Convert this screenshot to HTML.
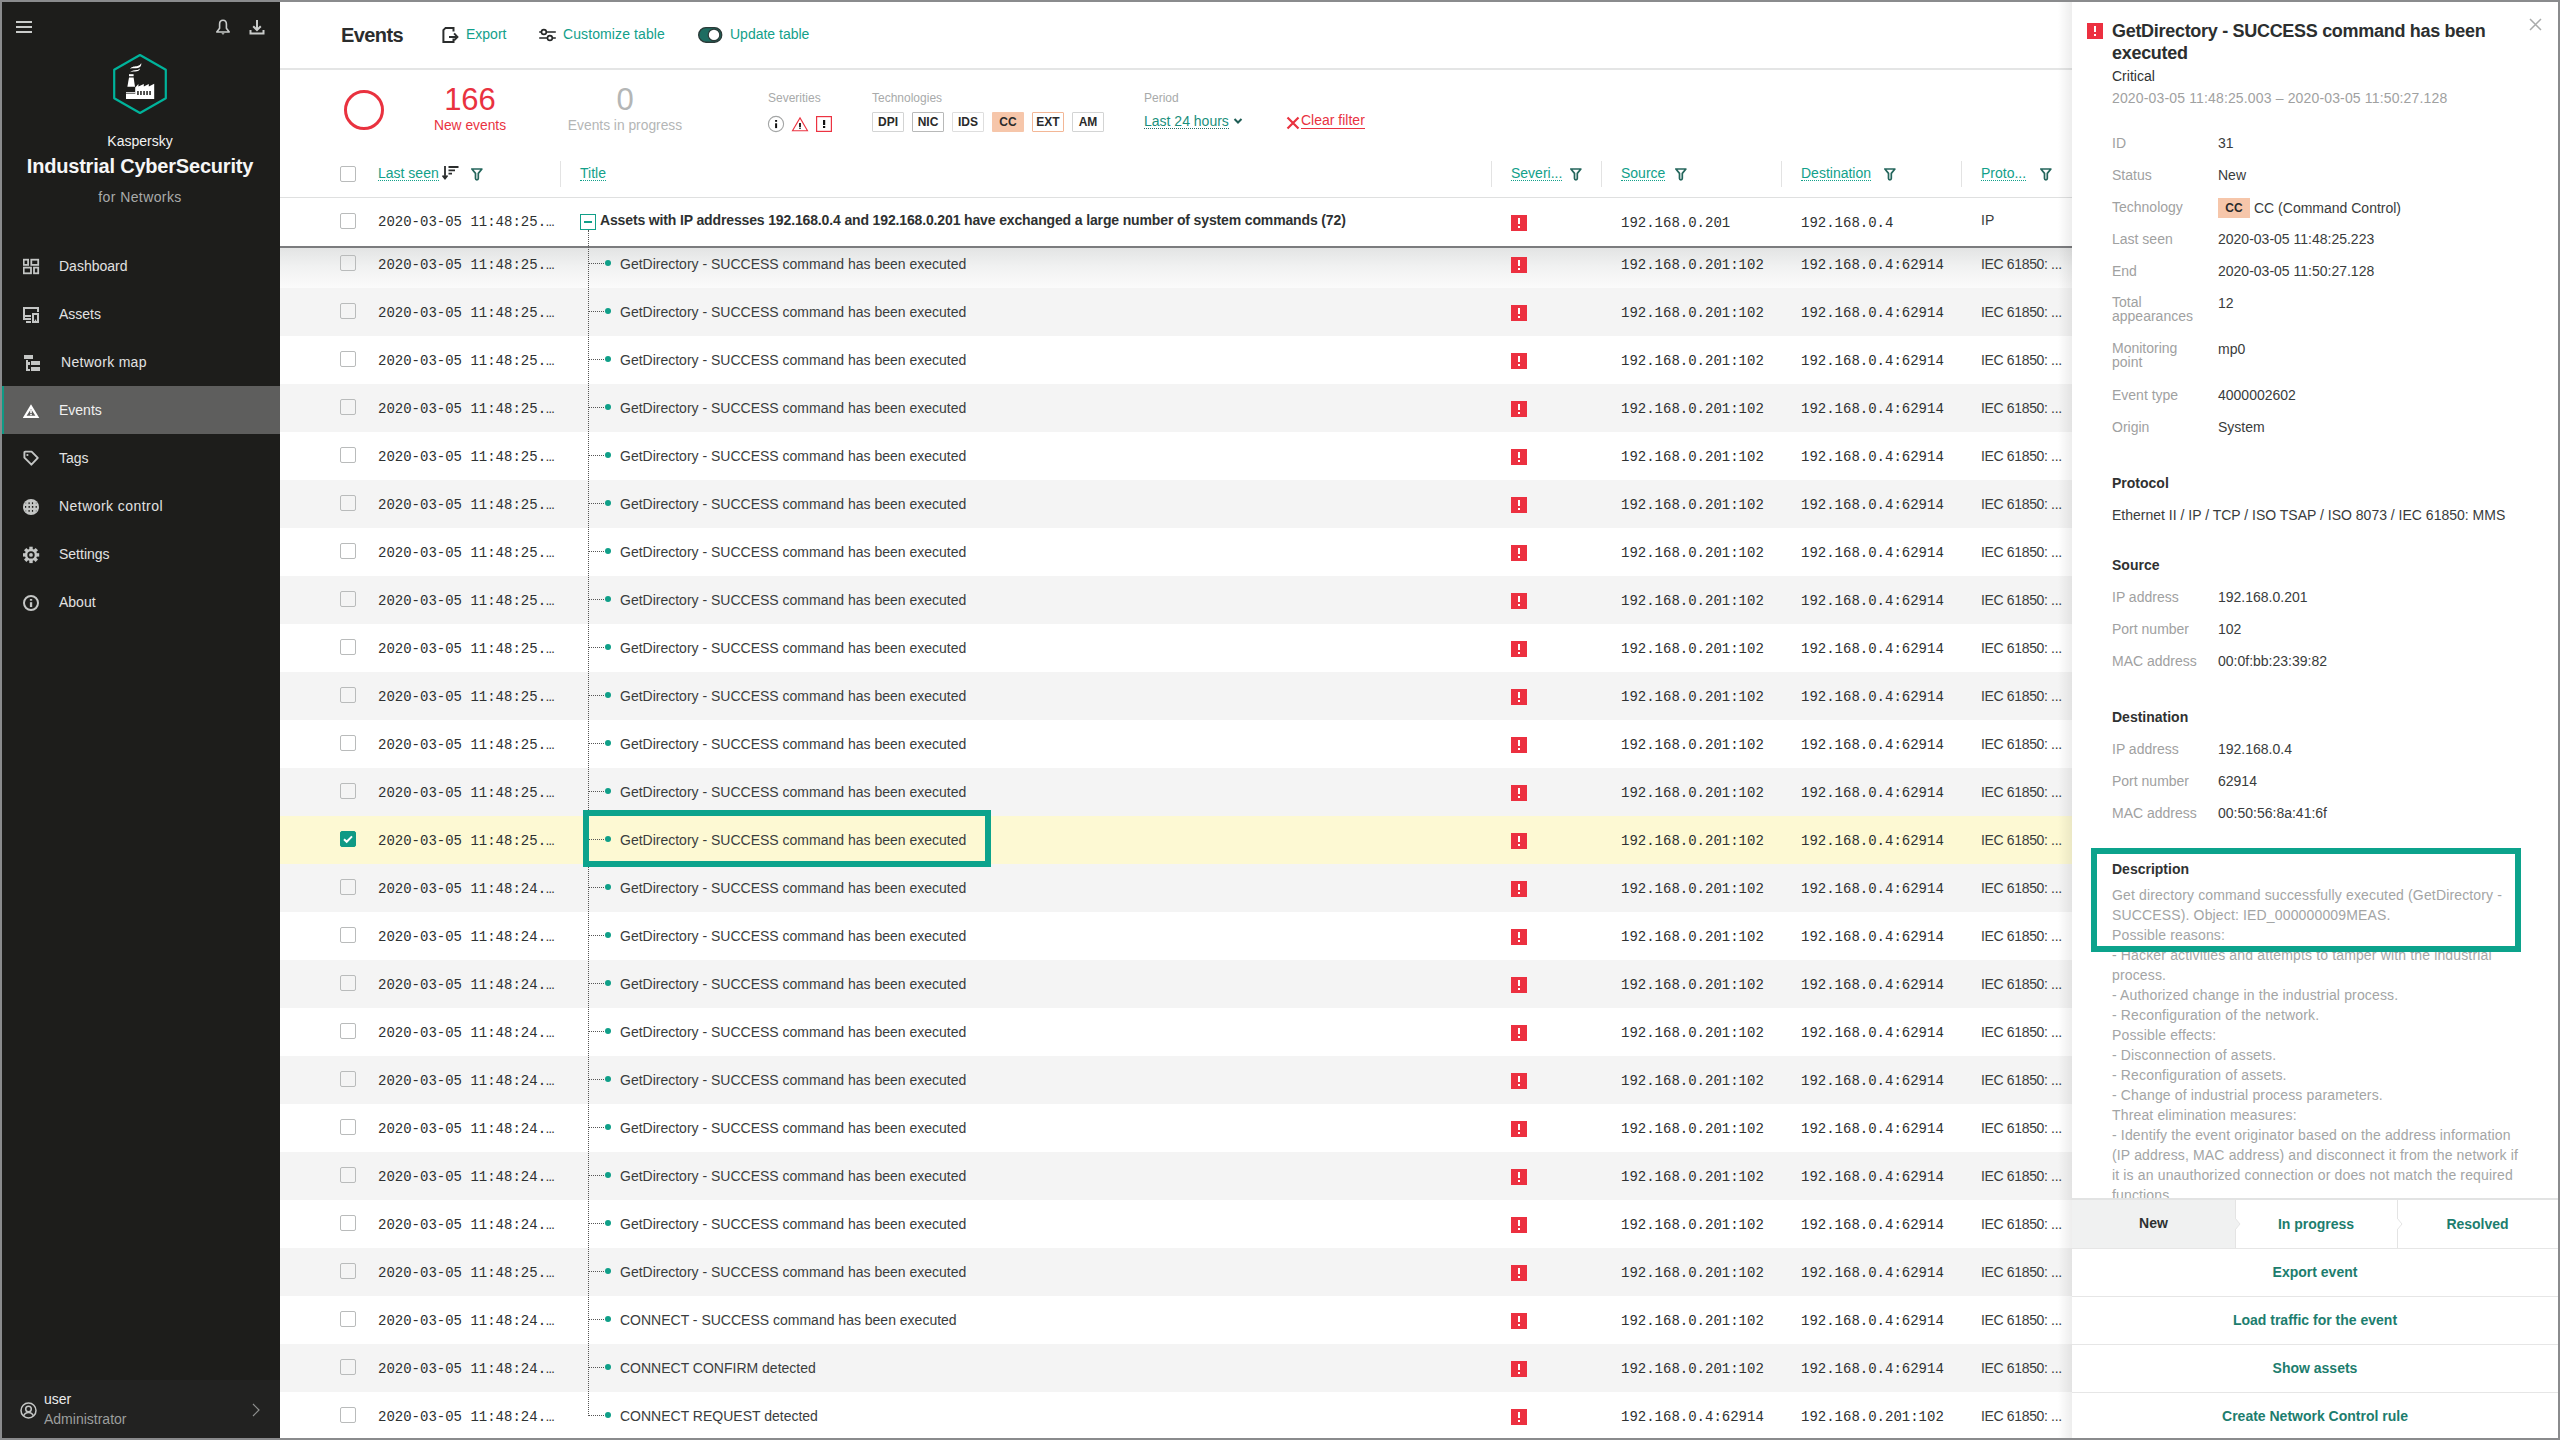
<!DOCTYPE html>
<html><head><meta charset="utf-8">
<style>
*{margin:0;padding:0;box-sizing:border-box}
html,body{width:2560px;height:1440px;overflow:hidden;background:#8a8b8d;font-family:"Liberation Sans",sans-serif;color:#2f3332}
.abs,.row,.cb,.mono,.ttl,.sev,.hdot,.dot,.t{position:absolute}
#side{position:absolute;left:2px;top:2px;width:278px;height:1436px;background:#1d1d1b;overflow:hidden}
#main{position:absolute;left:280px;top:2px;width:1792px;height:1436px;background:#fff;overflow:hidden}
#panel{position:absolute;left:2072px;top:2px;width:486px;height:1436px;background:#fff;overflow:hidden}
.t{white-space:nowrap;line-height:18px}
.mono{font-family:"Liberation Mono",monospace;font-size:14px;line-height:18px;white-space:nowrap;color:#2e3131}
.ttl{font-size:14px;line-height:18px;white-space:nowrap;color:#3a3d3d}
.row{left:280px;width:1792px}
.cb{width:16px;height:16px;border:1px solid #b9bbbb;border-radius:2px;background:transparent}
.cb.chk{background:#0f9a85;border-color:#0f9a85}
.cb.chk svg{position:absolute;left:-1px;top:-1px}
.sev{width:16px;height:16px}
.sev svg{display:block}
.hdot{width:15px;height:0;border-top:1px dotted #555}
.dot{width:6px;height:6px;border-radius:50%;background:#0f9f88}
.menu{position:absolute;left:0;width:278px;height:48px}
.menu .lab{position:absolute;left:57px;top:15px;font-size:14px;line-height:18px;color:#e2e2e2;white-space:nowrap}
.menu svg{position:absolute;left:21px;top:16px}
.hdr{color:#12a08a;font-size:14px;white-space:nowrap;position:absolute;line-height:14px;border-bottom:1px dotted #12a08a}
.sep{position:absolute;top:161px;width:1px;height:26px;background:#e3e3e3}
.fi{position:absolute;top:167px}
.chip{position:absolute;top:112px;height:20px;border:1px solid #d3d4d4;font-weight:700;font-size:12px;line-height:19px;text-align:center;color:#2a2a2a;border-radius:1px}
.plab{position:absolute;left:40px;font-size:14px;line-height:16px;color:#9fa1a1;white-space:nowrap}
.pval{position:absolute;left:146px;font-size:14px;line-height:16px;color:#393c3c;white-space:nowrap}
.psec{position:absolute;left:40px;font-size:14px;font-weight:700;color:#2f3131;white-space:nowrap;line-height:18px}
.btn{position:absolute;left:0;width:486px;height:48px;border-top:1px solid #e6e6e6;text-align:center;font-weight:700;font-size:14px;line-height:46px;color:#1d7d6e}
</style></head><body>

<div id="side">
  <!-- hamburger -->
  <div class="abs" style="left:14px;top:19px;width:16px;height:2px;background:#c9cbca"></div>
  <div class="abs" style="left:14px;top:24px;width:16px;height:2px;background:#c9cbca"></div>
  <div class="abs" style="left:14px;top:29px;width:16px;height:2px;background:#c9cbca"></div>
  <!-- bell -->
  <svg class="abs" style="left:213px;top:17px" width="16" height="16" viewBox="0 0 16 16"><path d="M8 1.2c-2.2 0-3.4 1.6-3.4 3.8v4.2L1.8 13h12.4l-2.8-3.8V5c0-2.2-1.2-3.8-3.4-3.8z" fill="none" stroke="#c9cbca" stroke-width="1.6" stroke-linejoin="round"/><path d="M6.3 14.2h3.4L8 15.8z" fill="#c9cbca"/></svg>
  <!-- download -->
  <svg class="abs" style="left:247px;top:17px" width="16" height="16" viewBox="0 0 16 16"><path d="M8 1v10M4.2 7.2L8 11l3.8-3.8" fill="none" stroke="#c9cbca" stroke-width="2"/><path d="M1.5 11v3.6h13V11" fill="none" stroke="#c9cbca" stroke-width="2"/></svg>
  <!-- logo -->
  <svg class="abs" style="left:106px;top:47px" width="64" height="72" viewBox="0 0 64 72">
    <path transform="translate(-108,-49)" d="M140 55 L165.8 69.8 L165.8 98.2 L140 113 L114.2 98.2 L114.2 69.8 Z" fill="none" stroke="#00b39b" stroke-width="2.2" stroke-linejoin="round"/>
    <g transform="translate(-108,-49)" fill="#fff">
      <path d="M130 68.8c2-2.6 5.2-2.4 7.6-2.8 1.6-.3 3-1.4 3.6-2.9.5 2.6-.8 4.4-3.2 4.8-2.6.4-5.6-.2-8 .9z"/>
      <path d="M130 72.3c1.8-2 4.4-2 6.6-2.3 1.4-.2 2.6-.8 3.4-1.6-.4 1.8-1.6 2.6-3.2 2.9-2.2.3-4.8.1-6.8 1z"/>
      <rect x="129" y="74.2" width="4.6" height="2"/>
      <path d="M129 77.4h4.6l1.4 9.4h-7.6z"/>
      <rect x="126" y="92.2" width="9.2" height="1.2"/>
      <path d="M126 94h9.2v-6.6l3.2-3.4v2.6l5.4-2.6v2.6l5-2.6v2.6l5.4-2.8V99H126z"/>
    </g>
    <g transform="translate(-108,-49)" fill="#1d1d1b">
      <rect x="137.2" y="91" width="1.5" height="4"/><rect x="140.2" y="91" width="1.5" height="4"/><rect x="143.3" y="91" width="1.5" height="4"/><rect x="146.3" y="91" width="1.5" height="4"/><rect x="149.3" y="91" width="1.5" height="4"/>
    </g>
  </svg>
  <div class="t" style="left:0;width:276px;text-align:center;top:130px;font-size:14px;color:#f2f2f2">Kaspersky</div>
  <div class="t" style="left:0;width:276px;text-align:center;top:152px;font-size:20px;line-height:24px;font-weight:700;color:#f6f6f6;letter-spacing:-0.2px">Industrial CyberSecurity</div>
  <div class="t" style="left:0;width:276px;text-align:center;top:186px;font-size:14px;color:#a9abaa;letter-spacing:0.4px">for Networks</div>

  <div class="menu" style="top:240px"><svg width="17" height="17" viewBox="0 0 17 17" fill="none" stroke="#c4c6c5" stroke-width="1.8"><rect x=".7" y="1.7" width="4.4" height="5.2"/><rect x="8.3" y="1.7" width="6.9" height="5.2"/><rect x=".7" y="9.6" width="7.3" height="5.7"/><rect x="11" y="9.6" width="4.2" height="5.7"/></svg><div class="lab">Dashboard</div></div>
  <div class="menu" style="top:288px"><svg width="17" height="18" viewBox="0 0 17 18" fill="#c4c6c5"><path d="M1 13V2h14v4" fill="none" stroke="#c4c6c5" stroke-width="2"/><rect x="2" y="9" width="6" height="2"/><rect x="0" y="12" width="8" height="2"/><rect x="3" y="15" width="5" height="2"/><rect x="10" y="8" width="5" height="8" fill="none" stroke="#c4c6c5" stroke-width="2"/><rect x="11.8" y="13.6" width="1.4" height="1.4"/></svg><div class="lab">Assets</div></div>
  <div class="menu" style="top:336px"><svg width="18" height="18" viewBox="0 0 18 18" fill="#c4c6c5"><rect x="1" y="1" width="9" height="4"/><rect x="3" y="6" width="2" height="11"/><rect x="5" y="8" width="2" height="3"/><rect x="3" y="15" width="4" height="2"/><rect x="8" y="7" width="9" height="4"/><rect x="8" y="13" width="9" height="4"/></svg><div class="lab" style="left:59px;letter-spacing:0.3px">Network map</div></div>
  <div class="menu" style="top:384px;background:#5e5e5d;border-left:2px solid #0f9a85"><svg width="17" height="17" viewBox="0 0 17 17" style="left:19px"><path fill-rule="evenodd" d="M8 2.2L16.3 16H-.3z M8 7L12.4 13.8H3.6z" fill="#fff"/><rect x="7.2" y="8" width="1.6" height="3.2" fill="#fff"/><rect x="7.2" y="12" width="1.6" height="1.2" fill="#fff"/></svg><div class="lab" style="left:55px;color:#f0f0f0">Events</div></div>
  <div class="menu" style="top:432px"><svg width="17" height="18" viewBox="0 0 17 18" fill="none" stroke="#c4c6c5" stroke-width="1.9"><path d="M1.4 2.4Q1.4 1.6 2.2 1.6H8.6L14.8 7.9 8.4 14.7 1.4 7.7z" stroke-linejoin="round"/><circle cx="4.4" cy="5" r="1.1" fill="#c4c6c5" stroke="none"/></svg><div class="lab">Tags</div></div>
  <div class="menu" style="top:480px"><svg width="17" height="18" viewBox="0 0 17 18"><circle cx="8" cy="9" r="8" fill="#c4c6c5"/><g fill="#1d1d1b"><rect x="5.5" y="4.3" width="1.2" height="1.8"/><rect x="8.9" y="4.3" width="1.2" height="1.8"/><rect x="2" y="8" width="1.2" height="1.8"/><rect x="5.5" y="8" width="1.4" height="1.8"/><rect x="8.9" y="8" width="1.4" height="1.8"/><rect x="12.6" y="8" width="1.2" height="1.8"/><rect x="5.5" y="12" width="1.2" height="1.8"/><rect x="8.9" y="12" width="1.2" height="1.8"/></g><g fill="#6a6b6b"><rect x="2.3" y="4.6" width="1" height="1"/><rect x="12.7" y="4.6" width="1" height="1"/><rect x="2.3" y="12.4" width="1" height="1"/><rect x="12.7" y="12.4" width="1" height="1"/></g></svg><div class="lab" style="letter-spacing:0.45px">Network control</div></div>
  <div class="menu" style="top:528px"><svg width="17" height="18" viewBox="0 0 17 18"><g transform="translate(8,8.9)" fill="#c4c6c5"><circle r="6.1"/><rect x="-1.7" y="-8.2" width="3.4" height="16.4"/><rect x="-1.7" y="-8.2" width="3.4" height="16.4" transform="rotate(45)"/><rect x="-1.7" y="-8.2" width="3.4" height="16.4" transform="rotate(90)"/><rect x="-1.7" y="-8.2" width="3.4" height="16.4" transform="rotate(135)"/><circle r="3.7" fill="#1d1d1b"/><circle r="1.9"/></g></svg><div class="lab">Settings</div></div>
  <div class="menu" style="top:576px"><svg width="17" height="18" viewBox="0 0 17 18"><circle cx="8" cy="9" r="7" fill="none" stroke="#c4c6c5" stroke-width="2"/><rect x="6.9" y="8.2" width="2.3" height="4.8" fill="#c4c6c5"/><rect x="6.9" y="5" width="2.3" height="1.7" fill="#c4c6c5"/></svg><div class="lab">About</div></div>

  <div class="abs" style="left:0;top:1378px;width:278px;height:58px;background:#222221"></div>
  <svg class="abs" style="left:18px;top:1400px" width="17" height="17" viewBox="0 0 17 17" fill="none" stroke="#c4c6c5" stroke-width="1.5"><circle cx="8.5" cy="8.5" r="7.5"/><circle cx="8.5" cy="7" r="2.8"/><path d="M3.5 14c1-2.4 2.8-3.6 5-3.6s4 1.2 5 3.6"/></svg>
  <div class="t" style="left:42px;top:1388px;font-size:14px;color:#ececec">user</div>
  <div class="t" style="left:42px;top:1408px;font-size:14px;color:#9c9e9d">Administrator</div>
  <svg class="abs" style="left:249px;top:1400px" width="10" height="16" viewBox="0 0 10 16"><path d="M2 2l6 6-6 6" fill="none" stroke="#8e908f" stroke-width="1.2"/></svg>
</div>

<div id="main">
</div>

<div id="overlay" style="position:absolute;left:0;top:0;width:2560px;height:1438px;overflow:hidden">
  <!-- toolbar -->
  <div class="t" style="left:341px;top:23px;font-size:20px;line-height:24px;font-weight:700;color:#2b2d2d;letter-spacing:-0.6px">Events</div>
  <svg class="abs" style="left:441px;top:26px" width="18" height="17" viewBox="0 0 18 17"><path d="M12.5 5.6V1.9H4.6L2.4 4.1V15.9h10.1v-3.4" fill="none" stroke="#2b2d2d" stroke-width="2"/><path d="M8 10.9h7.6M13.1 7.4l3.3 3.5-3.3 3.5" fill="none" stroke="#2b2d2d" stroke-width="2"/></svg>
  <div class="t" style="left:466px;top:25px;font-size:14px;color:#12a08a">Export</div>
  <svg class="abs" style="left:538px;top:26px" width="18" height="18" viewBox="0 0 18 18" fill="none" stroke="#252727" stroke-width="1.6"><path d="M1.2 6h16.6M1.2 12h16.6"/><circle cx="5.9" cy="6" r="2.4" fill="#fff"/><circle cx="11.9" cy="12" r="2.4" fill="#fff"/></svg>
  <div class="t" style="left:563px;top:25px;font-size:14px;color:#12a08a;letter-spacing:0.1px">Customize table</div>
  <svg class="abs" style="left:697px;top:26px" width="26" height="18" viewBox="0 0 26 18"><rect x="1.7" y="1.6" width="23" height="14.6" rx="7.3" fill="#1e6d61" stroke="#2b3a38" stroke-width="1.4"/><circle cx="17" cy="8.9" r="5.8" fill="#fff" stroke="#2b3a38" stroke-width="1.2"/></svg>
  <div class="t" style="left:730px;top:25px;font-size:14px;color:#12a08a">Update table</div>
  <div class="abs" style="left:280px;top:68px;width:1792px;height:2px;background:#e4e5e5"></div>

  <!-- stats -->
  <div class="abs" style="left:344px;top:90px;width:40px;height:40px;border:3px solid #e9323f;border-radius:50%"></div>
  <div class="t" style="left:420px;width:100px;text-align:center;top:82px;font-size:31px;line-height:36px;color:#e9323f">166</div>
  <div class="t" style="left:420px;width:100px;text-align:center;top:117px;font-size:13.8px;color:#e9323f">New events</div>
  <div class="t" style="left:575px;width:100px;text-align:center;top:82px;font-size:31px;line-height:36px;color:#b4b6b6">0</div>
  <div class="t" style="left:560px;width:130px;text-align:center;top:117px;font-size:13.8px;color:#b4b6b6">Events in progress</div>

  <div class="t" style="left:768px;top:90px;font-size:12px;line-height:16px;color:#a8aaaa">Severities</div>
  <svg class="abs" style="left:767px;top:115px" width="18" height="18" viewBox="0 0 18 18"><circle cx="9" cy="9" r="7.6" fill="none" stroke="#a3a5a5" stroke-width="1.1"/><rect x="8.1" y="8.3" width="2" height="4.8" fill="#111"/><rect x="8.1" y="5" width="2" height="1.8" fill="#111"/></svg>
  <svg class="abs" style="left:791px;top:116px" width="18" height="16" viewBox="0 0 18 16"><path d="M9 1.9L16.5 14.8H1.5z" fill="none" stroke="#ec3341" stroke-width="1.1" stroke-linejoin="miter"/><rect x="8.1" y="7" width="1.8" height="4" fill="#111"/><rect x="8.1" y="11.7" width="1.8" height="1.1" fill="#111"/></svg>
  <svg class="abs" style="left:816px;top:116px" width="16" height="16" viewBox="0 0 16 16"><rect x=".6" y=".6" width="14.8" height="14.8" fill="none" stroke="#ec3341" stroke-width="1.2"/><rect x="7" y="4" width="2.2" height="5" fill="#111"/><rect x="7" y="10" width="2.2" height="2" fill="#111"/></svg>

  <div class="t" style="left:872px;top:90px;font-size:12px;line-height:16px;color:#a8aaaa">Technologies</div>
  <div class="chip" style="left:872px;width:32px">DPI</div>
  <div class="chip" style="left:912px;width:32px;border-color:#b8b9b9">NIC</div>
  <div class="chip" style="left:952px;width:32px;border-color:#dedede">IDS</div>
  <div class="chip" style="left:992px;width:32px;border:none;background:#f6c6aa;line-height:21px">CC</div>
  <div class="chip" style="left:1032px;width:32px;border-color:#f3b796">EXT</div>
  <div class="chip" style="left:1072px;width:32px">AM</div>

  <div class="t" style="left:1144px;top:90px;font-size:12px;line-height:16px;color:#a8aaaa">Period</div>
  <div class="hdr" style="left:1144px;top:114px;color:#1a8f7c;border-color:#2a6b62">Last 24 hours</div>
  <svg class="abs" style="left:1233px;top:117px" width="10" height="8" viewBox="0 0 10 8"><path d="M1.5 2l3.5 3.5L8.5 2" fill="none" stroke="#1f5d55" stroke-width="2"/></svg>
  <svg class="abs" style="left:1286px;top:116px" width="14" height="14" viewBox="0 0 14 14"><path d="M1.5 1.5l11 11M12.5 1.5l-11 11" stroke="#e9323f" stroke-width="2.2"/></svg>
  <div class="t" style="left:1301px;top:113px;font-size:14px;color:#e9323f;border-bottom:1px solid #e9323f;line-height:15px">Clear filter</div>

  <!-- table header -->
  <div class="cb" style="left:340px;top:166px"></div>
  <div class="hdr" style="left:378px;top:166px">Last seen</div>
  <svg class="abs" style="left:442px;top:166px" width="17" height="14" viewBox="0 0 17 14"><path d="M3 0v12M0.5 9.5L3 12.5 5.5 9.5" fill="none" stroke="#2b2d2d" stroke-width="1.8"/><path d="M6.5 1h10M6.5 4.3h6.5M6.5 7.6h3.5" stroke="#2b2d2d" stroke-width="1.8"/></svg>
  <div class="fi" style="left:471px"><svg width="12" height="13" viewBox="0 0 12 13"><path d="M.9 1H10.9L7.3 5.4V10.6Q7.3 11.8 5.9 11.8Q4.5 11.8 4.5 10.6V5.4Z" fill="none" stroke="#24665c" stroke-width="1.7" stroke-linejoin="round"/></svg></div>
  <div class="sep" style="left:560px"></div>
  <div class="hdr" style="left:580px;top:166px">Title</div>
  <div class="sep" style="left:1491px"></div>
  <div class="hdr" style="left:1511px;top:166px">Severi...</div>
  <div class="fi" style="left:1570px"><svg width="12" height="13" viewBox="0 0 12 13"><path d="M.9 1H10.9L7.3 5.4V10.6Q7.3 11.8 5.9 11.8Q4.5 11.8 4.5 10.6V5.4Z" fill="none" stroke="#24665c" stroke-width="1.7" stroke-linejoin="round"/></svg></div>
  <div class="sep" style="left:1601px"></div>
  <div class="hdr" style="left:1621px;top:166px">Source</div>
  <div class="fi" style="left:1675px"><svg width="12" height="13" viewBox="0 0 12 13"><path d="M.9 1H10.9L7.3 5.4V10.6Q7.3 11.8 5.9 11.8Q4.5 11.8 4.5 10.6V5.4Z" fill="none" stroke="#24665c" stroke-width="1.7" stroke-linejoin="round"/></svg></div>
  <div class="sep" style="left:1781px"></div>
  <div class="hdr" style="left:1801px;top:166px">Destination</div>
  <div class="fi" style="left:1884px"><svg width="12" height="13" viewBox="0 0 12 13"><path d="M.9 1H10.9L7.3 5.4V10.6Q7.3 11.8 5.9 11.8Q4.5 11.8 4.5 10.6V5.4Z" fill="none" stroke="#24665c" stroke-width="1.7" stroke-linejoin="round"/></svg></div>
  <div class="sep" style="left:1961px"></div>
  <div class="hdr" style="left:1981px;top:166px">Proto...</div>
  <div class="fi" style="left:2040px"><svg width="12" height="13" viewBox="0 0 12 13"><path d="M.9 1H10.9L7.3 5.4V10.6Q7.3 11.8 5.9 11.8Q4.5 11.8 4.5 10.6V5.4Z" fill="none" stroke="#24665c" stroke-width="1.7" stroke-linejoin="round"/></svg></div>
  <div class="abs" style="left:280px;top:197px;width:1792px;height:1px;background:#dfe0e0"></div>

  <!-- child rows -->
  <div class="row" style="top:248px;height:40px;background:linear-gradient(#e3e4e4,#f0f1f1 45%,#fbfbfb)"></div>
<div class="cb" style="left:340px;top:255px"></div>
<div class="mono" style="left:378px;top:256px">2020-03-05 11:48:25.…</div>
<div class="hdot" style="left:589px;top:263px"></div><div class="dot" style="left:605px;top:260px"></div>
<div class="ttl" style="left:620px;top:255px">GetDirectory - SUCCESS command has been executed</div>
<div class="sev" style="left:1511px;top:257px"><svg width="16" height="16" viewBox="0 0 16 16"><rect width="16" height="16" fill="#ec3040"/><rect x="7" y="3" width="2" height="6" fill="#fff"/><rect x="7" y="11" width="2" height="2" fill="#fff"/></svg></div>
<div class="mono" style="left:1621px;top:256px">192.168.0.201:102</div>
<div class="mono" style="left:1801px;top:256px">192.168.0.4:62914</div>
<div class="ttl" style="left:1981px;top:255px;letter-spacing:-0.35px">IEC 61850: ...</div>
<div class="row" style="top:288px;height:48px;background:#f4f4f4"></div>
<div class="cb" style="left:340px;top:303px"></div>
<div class="mono" style="left:378px;top:304px">2020-03-05 11:48:25.…</div>
<div class="hdot" style="left:589px;top:311px"></div><div class="dot" style="left:605px;top:308px"></div>
<div class="ttl" style="left:620px;top:303px">GetDirectory - SUCCESS command has been executed</div>
<div class="sev" style="left:1511px;top:305px"><svg width="16" height="16" viewBox="0 0 16 16"><rect width="16" height="16" fill="#ec3040"/><rect x="7" y="3" width="2" height="6" fill="#fff"/><rect x="7" y="11" width="2" height="2" fill="#fff"/></svg></div>
<div class="mono" style="left:1621px;top:304px">192.168.0.201:102</div>
<div class="mono" style="left:1801px;top:304px">192.168.0.4:62914</div>
<div class="ttl" style="left:1981px;top:303px;letter-spacing:-0.35px">IEC 61850: ...</div>
<div class="row" style="top:336px;height:48px;background:#ffffff"></div>
<div class="cb" style="left:340px;top:351px"></div>
<div class="mono" style="left:378px;top:352px">2020-03-05 11:48:25.…</div>
<div class="hdot" style="left:589px;top:359px"></div><div class="dot" style="left:605px;top:356px"></div>
<div class="ttl" style="left:620px;top:351px">GetDirectory - SUCCESS command has been executed</div>
<div class="sev" style="left:1511px;top:353px"><svg width="16" height="16" viewBox="0 0 16 16"><rect width="16" height="16" fill="#ec3040"/><rect x="7" y="3" width="2" height="6" fill="#fff"/><rect x="7" y="11" width="2" height="2" fill="#fff"/></svg></div>
<div class="mono" style="left:1621px;top:352px">192.168.0.201:102</div>
<div class="mono" style="left:1801px;top:352px">192.168.0.4:62914</div>
<div class="ttl" style="left:1981px;top:351px;letter-spacing:-0.35px">IEC 61850: ...</div>
<div class="row" style="top:384px;height:48px;background:#f4f4f4"></div>
<div class="cb" style="left:340px;top:399px"></div>
<div class="mono" style="left:378px;top:400px">2020-03-05 11:48:25.…</div>
<div class="hdot" style="left:589px;top:407px"></div><div class="dot" style="left:605px;top:404px"></div>
<div class="ttl" style="left:620px;top:399px">GetDirectory - SUCCESS command has been executed</div>
<div class="sev" style="left:1511px;top:401px"><svg width="16" height="16" viewBox="0 0 16 16"><rect width="16" height="16" fill="#ec3040"/><rect x="7" y="3" width="2" height="6" fill="#fff"/><rect x="7" y="11" width="2" height="2" fill="#fff"/></svg></div>
<div class="mono" style="left:1621px;top:400px">192.168.0.201:102</div>
<div class="mono" style="left:1801px;top:400px">192.168.0.4:62914</div>
<div class="ttl" style="left:1981px;top:399px;letter-spacing:-0.35px">IEC 61850: ...</div>
<div class="row" style="top:432px;height:48px;background:#ffffff"></div>
<div class="cb" style="left:340px;top:447px"></div>
<div class="mono" style="left:378px;top:448px">2020-03-05 11:48:25.…</div>
<div class="hdot" style="left:589px;top:455px"></div><div class="dot" style="left:605px;top:452px"></div>
<div class="ttl" style="left:620px;top:447px">GetDirectory - SUCCESS command has been executed</div>
<div class="sev" style="left:1511px;top:449px"><svg width="16" height="16" viewBox="0 0 16 16"><rect width="16" height="16" fill="#ec3040"/><rect x="7" y="3" width="2" height="6" fill="#fff"/><rect x="7" y="11" width="2" height="2" fill="#fff"/></svg></div>
<div class="mono" style="left:1621px;top:448px">192.168.0.201:102</div>
<div class="mono" style="left:1801px;top:448px">192.168.0.4:62914</div>
<div class="ttl" style="left:1981px;top:447px;letter-spacing:-0.35px">IEC 61850: ...</div>
<div class="row" style="top:480px;height:48px;background:#f4f4f4"></div>
<div class="cb" style="left:340px;top:495px"></div>
<div class="mono" style="left:378px;top:496px">2020-03-05 11:48:25.…</div>
<div class="hdot" style="left:589px;top:503px"></div><div class="dot" style="left:605px;top:500px"></div>
<div class="ttl" style="left:620px;top:495px">GetDirectory - SUCCESS command has been executed</div>
<div class="sev" style="left:1511px;top:497px"><svg width="16" height="16" viewBox="0 0 16 16"><rect width="16" height="16" fill="#ec3040"/><rect x="7" y="3" width="2" height="6" fill="#fff"/><rect x="7" y="11" width="2" height="2" fill="#fff"/></svg></div>
<div class="mono" style="left:1621px;top:496px">192.168.0.201:102</div>
<div class="mono" style="left:1801px;top:496px">192.168.0.4:62914</div>
<div class="ttl" style="left:1981px;top:495px;letter-spacing:-0.35px">IEC 61850: ...</div>
<div class="row" style="top:528px;height:48px;background:#ffffff"></div>
<div class="cb" style="left:340px;top:543px"></div>
<div class="mono" style="left:378px;top:544px">2020-03-05 11:48:25.…</div>
<div class="hdot" style="left:589px;top:551px"></div><div class="dot" style="left:605px;top:548px"></div>
<div class="ttl" style="left:620px;top:543px">GetDirectory - SUCCESS command has been executed</div>
<div class="sev" style="left:1511px;top:545px"><svg width="16" height="16" viewBox="0 0 16 16"><rect width="16" height="16" fill="#ec3040"/><rect x="7" y="3" width="2" height="6" fill="#fff"/><rect x="7" y="11" width="2" height="2" fill="#fff"/></svg></div>
<div class="mono" style="left:1621px;top:544px">192.168.0.201:102</div>
<div class="mono" style="left:1801px;top:544px">192.168.0.4:62914</div>
<div class="ttl" style="left:1981px;top:543px;letter-spacing:-0.35px">IEC 61850: ...</div>
<div class="row" style="top:576px;height:48px;background:#f4f4f4"></div>
<div class="cb" style="left:340px;top:591px"></div>
<div class="mono" style="left:378px;top:592px">2020-03-05 11:48:25.…</div>
<div class="hdot" style="left:589px;top:599px"></div><div class="dot" style="left:605px;top:596px"></div>
<div class="ttl" style="left:620px;top:591px">GetDirectory - SUCCESS command has been executed</div>
<div class="sev" style="left:1511px;top:593px"><svg width="16" height="16" viewBox="0 0 16 16"><rect width="16" height="16" fill="#ec3040"/><rect x="7" y="3" width="2" height="6" fill="#fff"/><rect x="7" y="11" width="2" height="2" fill="#fff"/></svg></div>
<div class="mono" style="left:1621px;top:592px">192.168.0.201:102</div>
<div class="mono" style="left:1801px;top:592px">192.168.0.4:62914</div>
<div class="ttl" style="left:1981px;top:591px;letter-spacing:-0.35px">IEC 61850: ...</div>
<div class="row" style="top:624px;height:48px;background:#ffffff"></div>
<div class="cb" style="left:340px;top:639px"></div>
<div class="mono" style="left:378px;top:640px">2020-03-05 11:48:25.…</div>
<div class="hdot" style="left:589px;top:647px"></div><div class="dot" style="left:605px;top:644px"></div>
<div class="ttl" style="left:620px;top:639px">GetDirectory - SUCCESS command has been executed</div>
<div class="sev" style="left:1511px;top:641px"><svg width="16" height="16" viewBox="0 0 16 16"><rect width="16" height="16" fill="#ec3040"/><rect x="7" y="3" width="2" height="6" fill="#fff"/><rect x="7" y="11" width="2" height="2" fill="#fff"/></svg></div>
<div class="mono" style="left:1621px;top:640px">192.168.0.201:102</div>
<div class="mono" style="left:1801px;top:640px">192.168.0.4:62914</div>
<div class="ttl" style="left:1981px;top:639px;letter-spacing:-0.35px">IEC 61850: ...</div>
<div class="row" style="top:672px;height:48px;background:#f4f4f4"></div>
<div class="cb" style="left:340px;top:687px"></div>
<div class="mono" style="left:378px;top:688px">2020-03-05 11:48:25.…</div>
<div class="hdot" style="left:589px;top:695px"></div><div class="dot" style="left:605px;top:692px"></div>
<div class="ttl" style="left:620px;top:687px">GetDirectory - SUCCESS command has been executed</div>
<div class="sev" style="left:1511px;top:689px"><svg width="16" height="16" viewBox="0 0 16 16"><rect width="16" height="16" fill="#ec3040"/><rect x="7" y="3" width="2" height="6" fill="#fff"/><rect x="7" y="11" width="2" height="2" fill="#fff"/></svg></div>
<div class="mono" style="left:1621px;top:688px">192.168.0.201:102</div>
<div class="mono" style="left:1801px;top:688px">192.168.0.4:62914</div>
<div class="ttl" style="left:1981px;top:687px;letter-spacing:-0.35px">IEC 61850: ...</div>
<div class="row" style="top:720px;height:48px;background:#ffffff"></div>
<div class="cb" style="left:340px;top:735px"></div>
<div class="mono" style="left:378px;top:736px">2020-03-05 11:48:25.…</div>
<div class="hdot" style="left:589px;top:743px"></div><div class="dot" style="left:605px;top:740px"></div>
<div class="ttl" style="left:620px;top:735px">GetDirectory - SUCCESS command has been executed</div>
<div class="sev" style="left:1511px;top:737px"><svg width="16" height="16" viewBox="0 0 16 16"><rect width="16" height="16" fill="#ec3040"/><rect x="7" y="3" width="2" height="6" fill="#fff"/><rect x="7" y="11" width="2" height="2" fill="#fff"/></svg></div>
<div class="mono" style="left:1621px;top:736px">192.168.0.201:102</div>
<div class="mono" style="left:1801px;top:736px">192.168.0.4:62914</div>
<div class="ttl" style="left:1981px;top:735px;letter-spacing:-0.35px">IEC 61850: ...</div>
<div class="row" style="top:768px;height:48px;background:#f4f4f4"></div>
<div class="cb" style="left:340px;top:783px"></div>
<div class="mono" style="left:378px;top:784px">2020-03-05 11:48:25.…</div>
<div class="hdot" style="left:589px;top:791px"></div><div class="dot" style="left:605px;top:788px"></div>
<div class="ttl" style="left:620px;top:783px">GetDirectory - SUCCESS command has been executed</div>
<div class="sev" style="left:1511px;top:785px"><svg width="16" height="16" viewBox="0 0 16 16"><rect width="16" height="16" fill="#ec3040"/><rect x="7" y="3" width="2" height="6" fill="#fff"/><rect x="7" y="11" width="2" height="2" fill="#fff"/></svg></div>
<div class="mono" style="left:1621px;top:784px">192.168.0.201:102</div>
<div class="mono" style="left:1801px;top:784px">192.168.0.4:62914</div>
<div class="ttl" style="left:1981px;top:783px;letter-spacing:-0.35px">IEC 61850: ...</div>
<div class="row" style="top:816px;height:48px;background:#fdf9d3"></div>
<div class="cb chk" style="left:340px;top:831px"><svg width="16" height="16" viewBox="0 0 16 16"><path d="M4 8.2l2.7 2.6L12 5.4" fill="none" stroke="#fff" stroke-width="2"/></svg></div>
<div class="mono" style="left:378px;top:832px">2020-03-05 11:48:25.…</div>
<div class="hdot" style="left:589px;top:839px"></div><div class="dot" style="left:605px;top:836px"></div>
<div class="ttl" style="left:620px;top:831px">GetDirectory - SUCCESS command has been executed</div>
<div class="sev" style="left:1511px;top:833px"><svg width="16" height="16" viewBox="0 0 16 16"><rect width="16" height="16" fill="#ec3040"/><rect x="7" y="3" width="2" height="6" fill="#fff"/><rect x="7" y="11" width="2" height="2" fill="#fff"/></svg></div>
<div class="mono" style="left:1621px;top:832px">192.168.0.201:102</div>
<div class="mono" style="left:1801px;top:832px">192.168.0.4:62914</div>
<div class="ttl" style="left:1981px;top:831px;letter-spacing:-0.35px">IEC 61850: ...</div>
<div class="row" style="top:864px;height:48px;background:#f4f4f4"></div>
<div class="cb" style="left:340px;top:879px"></div>
<div class="mono" style="left:378px;top:880px">2020-03-05 11:48:24.…</div>
<div class="hdot" style="left:589px;top:887px"></div><div class="dot" style="left:605px;top:884px"></div>
<div class="ttl" style="left:620px;top:879px">GetDirectory - SUCCESS command has been executed</div>
<div class="sev" style="left:1511px;top:881px"><svg width="16" height="16" viewBox="0 0 16 16"><rect width="16" height="16" fill="#ec3040"/><rect x="7" y="3" width="2" height="6" fill="#fff"/><rect x="7" y="11" width="2" height="2" fill="#fff"/></svg></div>
<div class="mono" style="left:1621px;top:880px">192.168.0.201:102</div>
<div class="mono" style="left:1801px;top:880px">192.168.0.4:62914</div>
<div class="ttl" style="left:1981px;top:879px;letter-spacing:-0.35px">IEC 61850: ...</div>
<div class="row" style="top:912px;height:48px;background:#ffffff"></div>
<div class="cb" style="left:340px;top:927px"></div>
<div class="mono" style="left:378px;top:928px">2020-03-05 11:48:24.…</div>
<div class="hdot" style="left:589px;top:935px"></div><div class="dot" style="left:605px;top:932px"></div>
<div class="ttl" style="left:620px;top:927px">GetDirectory - SUCCESS command has been executed</div>
<div class="sev" style="left:1511px;top:929px"><svg width="16" height="16" viewBox="0 0 16 16"><rect width="16" height="16" fill="#ec3040"/><rect x="7" y="3" width="2" height="6" fill="#fff"/><rect x="7" y="11" width="2" height="2" fill="#fff"/></svg></div>
<div class="mono" style="left:1621px;top:928px">192.168.0.201:102</div>
<div class="mono" style="left:1801px;top:928px">192.168.0.4:62914</div>
<div class="ttl" style="left:1981px;top:927px;letter-spacing:-0.35px">IEC 61850: ...</div>
<div class="row" style="top:960px;height:48px;background:#f4f4f4"></div>
<div class="cb" style="left:340px;top:975px"></div>
<div class="mono" style="left:378px;top:976px">2020-03-05 11:48:24.…</div>
<div class="hdot" style="left:589px;top:983px"></div><div class="dot" style="left:605px;top:980px"></div>
<div class="ttl" style="left:620px;top:975px">GetDirectory - SUCCESS command has been executed</div>
<div class="sev" style="left:1511px;top:977px"><svg width="16" height="16" viewBox="0 0 16 16"><rect width="16" height="16" fill="#ec3040"/><rect x="7" y="3" width="2" height="6" fill="#fff"/><rect x="7" y="11" width="2" height="2" fill="#fff"/></svg></div>
<div class="mono" style="left:1621px;top:976px">192.168.0.201:102</div>
<div class="mono" style="left:1801px;top:976px">192.168.0.4:62914</div>
<div class="ttl" style="left:1981px;top:975px;letter-spacing:-0.35px">IEC 61850: ...</div>
<div class="row" style="top:1008px;height:48px;background:#ffffff"></div>
<div class="cb" style="left:340px;top:1023px"></div>
<div class="mono" style="left:378px;top:1024px">2020-03-05 11:48:24.…</div>
<div class="hdot" style="left:589px;top:1031px"></div><div class="dot" style="left:605px;top:1028px"></div>
<div class="ttl" style="left:620px;top:1023px">GetDirectory - SUCCESS command has been executed</div>
<div class="sev" style="left:1511px;top:1025px"><svg width="16" height="16" viewBox="0 0 16 16"><rect width="16" height="16" fill="#ec3040"/><rect x="7" y="3" width="2" height="6" fill="#fff"/><rect x="7" y="11" width="2" height="2" fill="#fff"/></svg></div>
<div class="mono" style="left:1621px;top:1024px">192.168.0.201:102</div>
<div class="mono" style="left:1801px;top:1024px">192.168.0.4:62914</div>
<div class="ttl" style="left:1981px;top:1023px;letter-spacing:-0.35px">IEC 61850: ...</div>
<div class="row" style="top:1056px;height:48px;background:#f4f4f4"></div>
<div class="cb" style="left:340px;top:1071px"></div>
<div class="mono" style="left:378px;top:1072px">2020-03-05 11:48:24.…</div>
<div class="hdot" style="left:589px;top:1079px"></div><div class="dot" style="left:605px;top:1076px"></div>
<div class="ttl" style="left:620px;top:1071px">GetDirectory - SUCCESS command has been executed</div>
<div class="sev" style="left:1511px;top:1073px"><svg width="16" height="16" viewBox="0 0 16 16"><rect width="16" height="16" fill="#ec3040"/><rect x="7" y="3" width="2" height="6" fill="#fff"/><rect x="7" y="11" width="2" height="2" fill="#fff"/></svg></div>
<div class="mono" style="left:1621px;top:1072px">192.168.0.201:102</div>
<div class="mono" style="left:1801px;top:1072px">192.168.0.4:62914</div>
<div class="ttl" style="left:1981px;top:1071px;letter-spacing:-0.35px">IEC 61850: ...</div>
<div class="row" style="top:1104px;height:48px;background:#ffffff"></div>
<div class="cb" style="left:340px;top:1119px"></div>
<div class="mono" style="left:378px;top:1120px">2020-03-05 11:48:24.…</div>
<div class="hdot" style="left:589px;top:1127px"></div><div class="dot" style="left:605px;top:1124px"></div>
<div class="ttl" style="left:620px;top:1119px">GetDirectory - SUCCESS command has been executed</div>
<div class="sev" style="left:1511px;top:1121px"><svg width="16" height="16" viewBox="0 0 16 16"><rect width="16" height="16" fill="#ec3040"/><rect x="7" y="3" width="2" height="6" fill="#fff"/><rect x="7" y="11" width="2" height="2" fill="#fff"/></svg></div>
<div class="mono" style="left:1621px;top:1120px">192.168.0.201:102</div>
<div class="mono" style="left:1801px;top:1120px">192.168.0.4:62914</div>
<div class="ttl" style="left:1981px;top:1119px;letter-spacing:-0.35px">IEC 61850: ...</div>
<div class="row" style="top:1152px;height:48px;background:#f4f4f4"></div>
<div class="cb" style="left:340px;top:1167px"></div>
<div class="mono" style="left:378px;top:1168px">2020-03-05 11:48:24.…</div>
<div class="hdot" style="left:589px;top:1175px"></div><div class="dot" style="left:605px;top:1172px"></div>
<div class="ttl" style="left:620px;top:1167px">GetDirectory - SUCCESS command has been executed</div>
<div class="sev" style="left:1511px;top:1169px"><svg width="16" height="16" viewBox="0 0 16 16"><rect width="16" height="16" fill="#ec3040"/><rect x="7" y="3" width="2" height="6" fill="#fff"/><rect x="7" y="11" width="2" height="2" fill="#fff"/></svg></div>
<div class="mono" style="left:1621px;top:1168px">192.168.0.201:102</div>
<div class="mono" style="left:1801px;top:1168px">192.168.0.4:62914</div>
<div class="ttl" style="left:1981px;top:1167px;letter-spacing:-0.35px">IEC 61850: ...</div>
<div class="row" style="top:1200px;height:48px;background:#ffffff"></div>
<div class="cb" style="left:340px;top:1215px"></div>
<div class="mono" style="left:378px;top:1216px">2020-03-05 11:48:24.…</div>
<div class="hdot" style="left:589px;top:1223px"></div><div class="dot" style="left:605px;top:1220px"></div>
<div class="ttl" style="left:620px;top:1215px">GetDirectory - SUCCESS command has been executed</div>
<div class="sev" style="left:1511px;top:1217px"><svg width="16" height="16" viewBox="0 0 16 16"><rect width="16" height="16" fill="#ec3040"/><rect x="7" y="3" width="2" height="6" fill="#fff"/><rect x="7" y="11" width="2" height="2" fill="#fff"/></svg></div>
<div class="mono" style="left:1621px;top:1216px">192.168.0.201:102</div>
<div class="mono" style="left:1801px;top:1216px">192.168.0.4:62914</div>
<div class="ttl" style="left:1981px;top:1215px;letter-spacing:-0.35px">IEC 61850: ...</div>
<div class="row" style="top:1248px;height:48px;background:#f4f4f4"></div>
<div class="cb" style="left:340px;top:1263px"></div>
<div class="mono" style="left:378px;top:1264px">2020-03-05 11:48:25.…</div>
<div class="hdot" style="left:589px;top:1271px"></div><div class="dot" style="left:605px;top:1268px"></div>
<div class="ttl" style="left:620px;top:1263px">GetDirectory - SUCCESS command has been executed</div>
<div class="sev" style="left:1511px;top:1265px"><svg width="16" height="16" viewBox="0 0 16 16"><rect width="16" height="16" fill="#ec3040"/><rect x="7" y="3" width="2" height="6" fill="#fff"/><rect x="7" y="11" width="2" height="2" fill="#fff"/></svg></div>
<div class="mono" style="left:1621px;top:1264px">192.168.0.201:102</div>
<div class="mono" style="left:1801px;top:1264px">192.168.0.4:62914</div>
<div class="ttl" style="left:1981px;top:1263px;letter-spacing:-0.35px">IEC 61850: ...</div>
<div class="row" style="top:1296px;height:48px;background:#ffffff"></div>
<div class="cb" style="left:340px;top:1311px"></div>
<div class="mono" style="left:378px;top:1312px">2020-03-05 11:48:24.…</div>
<div class="hdot" style="left:589px;top:1319px"></div><div class="dot" style="left:605px;top:1316px"></div>
<div class="ttl" style="left:620px;top:1311px">CONNECT - SUCCESS command has been executed</div>
<div class="sev" style="left:1511px;top:1313px"><svg width="16" height="16" viewBox="0 0 16 16"><rect width="16" height="16" fill="#ec3040"/><rect x="7" y="3" width="2" height="6" fill="#fff"/><rect x="7" y="11" width="2" height="2" fill="#fff"/></svg></div>
<div class="mono" style="left:1621px;top:1312px">192.168.0.201:102</div>
<div class="mono" style="left:1801px;top:1312px">192.168.0.4:62914</div>
<div class="ttl" style="left:1981px;top:1311px;letter-spacing:-0.35px">IEC 61850: ...</div>
<div class="row" style="top:1344px;height:48px;background:#f4f4f4"></div>
<div class="cb" style="left:340px;top:1359px"></div>
<div class="mono" style="left:378px;top:1360px">2020-03-05 11:48:24.…</div>
<div class="hdot" style="left:589px;top:1367px"></div><div class="dot" style="left:605px;top:1364px"></div>
<div class="ttl" style="left:620px;top:1359px">CONNECT CONFIRM detected</div>
<div class="sev" style="left:1511px;top:1361px"><svg width="16" height="16" viewBox="0 0 16 16"><rect width="16" height="16" fill="#ec3040"/><rect x="7" y="3" width="2" height="6" fill="#fff"/><rect x="7" y="11" width="2" height="2" fill="#fff"/></svg></div>
<div class="mono" style="left:1621px;top:1360px">192.168.0.201:102</div>
<div class="mono" style="left:1801px;top:1360px">192.168.0.4:62914</div>
<div class="ttl" style="left:1981px;top:1359px;letter-spacing:-0.35px">IEC 61850: ...</div>
<div class="row" style="top:1392px;height:48px;background:#ffffff"></div>
<div class="cb" style="left:340px;top:1407px"></div>
<div class="mono" style="left:378px;top:1408px">2020-03-05 11:48:24.…</div>
<div class="hdot" style="left:589px;top:1415px"></div><div class="dot" style="left:605px;top:1412px"></div>
<div class="ttl" style="left:620px;top:1407px">CONNECT REQUEST detected</div>
<div class="sev" style="left:1511px;top:1409px"><svg width="16" height="16" viewBox="0 0 16 16"><rect width="16" height="16" fill="#ec3040"/><rect x="7" y="3" width="2" height="6" fill="#fff"/><rect x="7" y="11" width="2" height="2" fill="#fff"/></svg></div>
<div class="mono" style="left:1621px;top:1408px">192.168.0.4:62914</div>
<div class="mono" style="left:1801px;top:1408px">192.168.0.201:102</div>
<div class="ttl" style="left:1981px;top:1407px;letter-spacing:-0.35px">IEC 61850: ...</div>

  <!-- group row -->
  <div class="row" style="top:198px;height:48px;background:#fff"></div>
  <div class="cb" style="left:340px;top:213px"></div>
  <div class="mono" style="left:378px;top:213px">2020-03-05 11:48:25.…</div>
  <div class="abs" style="left:580px;top:214px;width:16px;height:16px;border:1px solid #119f89"></div>
  <div class="abs" style="left:584px;top:221px;width:8px;height:2px;background:#119f89"></div>
  <div class="ttl" style="left:600px;top:211px;font-weight:700;color:#2e3131;letter-spacing:-0.14px">Assets with IP addresses 192.168.0.4 and 192.168.0.201 have exchanged a large number of system commands (72)</div>
  <div class="sev" style="left:1511px;top:215px"><svg width="16" height="16" viewBox="0 0 16 16"><rect width="16" height="16" fill="#ec3040"/><rect x="7" y="3" width="2" height="6" fill="#fff"/><rect x="7" y="11" width="2" height="2" fill="#fff"/></svg></div>
  <div class="mono" style="left:1621px;top:214px">192.168.0.201</div>
  <div class="mono" style="left:1801px;top:214px">192.168.0.4</div>
  <div class="ttl" style="left:1981px;top:211px">IP</div>
  <div class="abs" style="left:280px;top:246px;width:1792px;height:2px;background:#7b7c7e"></div>
  
  <!-- vertical dotted -->
  <div class="abs" style="left:588px;top:230px;width:0;height:1186px;border-left:1px dotted #555"></div>

  <!-- highlight box -->
  <div class="abs" style="left:583px;top:810px;width:408px;height:57px;border:6px solid #0ca38c"></div>

  <!-- panel shadow -->
  <div class="abs" style="left:2058px;top:2px;width:14px;height:1436px;background:linear-gradient(90deg,rgba(0,0,0,0),rgba(0,0,0,0.07))"></div>
</div>

<div id="panel">
  <svg class="abs" style="left:15px;top:21px" width="16" height="16" viewBox="0 0 16 16"><rect width="16" height="16" fill="#ec3040"/><rect x="7" y="3" width="2" height="6" fill="#fff"/><rect x="7" y="11" width="2" height="2" fill="#fff"/></svg>
  <svg class="abs" style="left:457px;top:16px" width="13" height="13" viewBox="0 0 13 13"><path d="M1 1l11 11M12 1L1 12" stroke="#a9abab" stroke-width="1.5"/></svg>
  <div class="abs" style="left:40px;top:18px;width:400px;font-size:18px;line-height:22px;font-weight:700;color:#2c2f2f;letter-spacing:-0.3px">GetDirectory - SUCCESS command has been executed</div>
  <div class="t" style="left:40px;top:65px;font-size:14px;color:#303333">Critical</div>
  <div class="t" style="left:40px;top:87px;font-size:14px;color:#9fa1a1;letter-spacing:0.15px">2020-03-05 11:48:25.003 – 2020-03-05 11:50:27.128</div>

  <div class="plab" style="top:133px">ID</div><div class="pval" style="top:133px">31</div>
  <div class="plab" style="top:165px">Status</div><div class="pval" style="top:165px">New</div>
  <div class="plab" style="top:197px">Technology</div>
  <div class="abs" style="left:146px;top:196px;width:32px;height:20px;background:#f6c6aa;font-weight:700;font-size:12px;line-height:20px;text-align:center;color:#2a2a2a">CC</div>
  <div class="pval" style="top:198px;left:182px">CC (Command Control)</div>
  <div class="plab" style="top:229px">Last seen</div><div class="pval" style="top:229px">2020-03-05 11:48:25.223</div>
  <div class="plab" style="top:261px">End</div><div class="pval" style="top:261px">2020-03-05 11:50:27.128</div>
  <div class="plab" style="top:293px;line-height:14px">Total<br>appearances</div><div class="pval" style="top:293px">12</div>
  <div class="plab" style="top:339px;line-height:14px">Monitoring<br>point</div><div class="pval" style="top:339px">mp0</div>
  <div class="plab" style="top:385px">Event type</div><div class="pval" style="top:385px">4000002602</div>
  <div class="plab" style="top:417px">Origin</div><div class="pval" style="top:417px">System</div>

  <div class="psec" style="top:472px">Protocol</div>
  <div class="pval" style="left:40px;top:505px">Ethernet II / IP / TCP / ISO TSAP / ISO 8073 / IEC 61850: MMS</div>
  <div class="psec" style="top:554px">Source</div>
  <div class="plab" style="top:587px">IP address</div><div class="pval" style="top:587px">192.168.0.201</div>
  <div class="plab" style="top:619px">Port number</div><div class="pval" style="top:619px">102</div>
  <div class="plab" style="top:651px">MAC address</div><div class="pval" style="top:651px">00:0f:bb:23:39:82</div>
  <div class="psec" style="top:706px">Destination</div>
  <div class="plab" style="top:739px">IP address</div><div class="pval" style="top:739px">192.168.0.4</div>
  <div class="plab" style="top:771px">Port number</div><div class="pval" style="top:771px">62914</div>
  <div class="plab" style="top:803px">MAC address</div><div class="pval" style="top:803px">00:50:56:8a:41:6f</div>
  <div class="psec" style="top:858px">Description</div>
  <div class="abs" style="left:40px;top:883px;width:440px;font-size:14px;line-height:20px;color:#a3a5a5;letter-spacing:0.15px;white-space:nowrap">Get directory command successfully executed (GetDirectory -<br>SUCCESS). Object: IED_000000009MEAS.<br>Possible reasons:<br>- Hacker activities and attempts to tamper with the industrial<br>process.<br>- Authorized change in the industrial process.<br>- Reconfiguration of the network.<br>Possible effects:<br>- Disconnection of assets.<br>- Reconfiguration of assets.<br>- Change of industrial process parameters.<br>Threat elimination measures:<br>- Identify the event originator based on the address information<br>(IP address, MAC address) and disconnect it from the network if<br>it is an unauthorized connection or does not match the required<br>functions.</div>

  <div class="abs" style="left:0;top:1196px;width:486px;height:2px;background:#e2e3e3"></div>
  <div class="abs" style="left:0;top:1198px;width:486px;height:48px;background:#fff"></div>
  <div class="abs" style="left:0;top:1198px;width:163px;height:48px;background:#f0f1f1"></div>
  <div class="abs" style="left:163px;top:1198px;width:1px;height:48px;background:#e4e4e4"></div><svg class="abs" style="left:163px;top:1216px" width="6" height="12" viewBox="0 0 6 12"><path d="M0 0l5 6-5 6z" fill="#f0f1f1"/><path d="M0 0l5 6-5 6" fill="none" stroke="#e4e4e4"/></svg>
  <div class="abs" style="left:325px;top:1198px;width:1px;height:48px;background:#e4e4e4"></div><svg class="abs" style="left:325px;top:1216px" width="6" height="12" viewBox="0 0 6 12"><path d="M0 0l5 6-5 6z" fill="#fff"/><path d="M0 0l5 6-5 6" fill="none" stroke="#e4e4e4"/></svg>
  <div class="t" style="left:0;width:163px;text-align:center;top:1212px;font-size:14px;font-weight:700;color:#2e3131">New</div>
  <div class="t" style="left:163px;width:162px;text-align:center;top:1213px;font-size:14px;font-weight:700;color:#1d7d6e">In progress</div>
  <div class="t" style="left:325px;width:161px;text-align:center;top:1213px;font-size:14px;font-weight:700;color:#1d7d6e">Resolved</div>
  <div class="btn" style="top:1246px">Export event</div>
  <div class="btn" style="top:1294px">Load traffic for the event</div>
  <div class="btn" style="top:1342px">Show assets</div>
  <div class="btn" style="top:1390px">Create Network Control rule</div>
  <!-- description highlight -->
</div>
<div class="abs" style="left:2091px;top:848px;width:430px;height:104px;border:6px solid #0ca38c"></div>
</body></html>
